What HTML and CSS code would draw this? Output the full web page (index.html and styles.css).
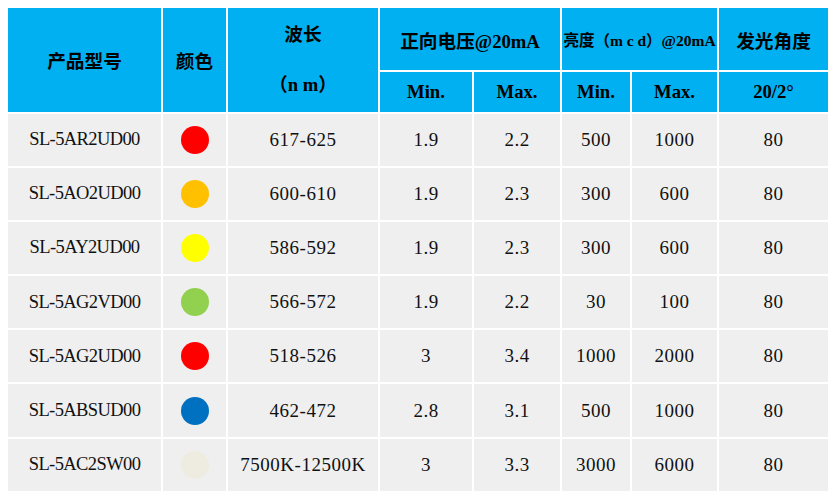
FILE: index.html
```html
<!DOCTYPE html>
<html lang="zh">
<head>
<meta charset="utf-8">
<link rel="stylesheet" href="styles.css">
</head>
<body>
<div class="wrap">
<table class="spec">
  <colgroup>
    <col class="c1"><col class="c2"><col class="c3"><col class="c4"><col class="c5"><col class="c6"><col class="c7"><col class="c8">
  </colgroup>
  <thead>
    <tr class="h1">
      <th rowspan="2">产品型号</th>
      <th rowspan="2">颜色</th>
      <th rowspan="2"><div class="wl"><span>波长</span><span>（n m）</span></div></th>
      <th colspan="2">正向电压@20mA</th>
      <th colspan="2" class="small">亮度（m c d）@20mA</th>
      <th>发光角度</th>
    </tr>
    <tr class="h2">
      <th>Min.</th>
      <th>Max.</th>
      <th>Min.</th>
      <th>Max.</th>
      <th>20/2°</th>
    </tr>
  </thead>
  <tbody>
    <tr><td class="model">SL-5AR2UD00</td><td><span class="dot red"></span></td><td>617-625</td><td>1.9</td><td>2.2</td><td>500</td><td>1000</td><td>80</td></tr>
    <tr><td class="model">SL-5AO2UD00</td><td><span class="dot amber"></span></td><td>600-610</td><td>1.9</td><td>2.3</td><td>300</td><td>600</td><td>80</td></tr>
    <tr><td class="model">SL-5AY2UD00</td><td><span class="dot yellow"></span></td><td>586-592</td><td>1.9</td><td>2.3</td><td>300</td><td>600</td><td>80</td></tr>
    <tr><td class="model">SL-5AG2VD00</td><td><span class="dot green"></span></td><td>566-572</td><td>1.9</td><td>2.2</td><td>30</td><td>100</td><td>80</td></tr>
    <tr><td class="model">SL-5AG2UD00</td><td><span class="dot red"></span></td><td>518-526</td><td>3</td><td>3.4</td><td>1000</td><td>2000</td><td>80</td></tr>
    <tr><td class="model">SL-5ABSUD00</td><td><span class="dot blue"></span></td><td>462-472</td><td>2.8</td><td>3.1</td><td>500</td><td>1000</td><td>80</td></tr>
    <tr><td class="model">SL-5AC2SW00</td><td><span class="dot white"></span></td><td>7500K-12500K</td><td>3</td><td>3.3</td><td>3000</td><td>6000</td><td>80</td></tr>
  </tbody>
</table>
</div>
</body>
</html>
```
FILE: styles.css
```css
html, body {
  margin: 0;
  padding: 0;
  background: #ffffff;
}
.wrap {
  padding: 6px;
}
.spec {
  border-collapse: separate;
  border-spacing: 2px;
  table-layout: fixed;
  width: 824px;
}
.c1 { width: 153px; }
.c2 { width: 63px; }
.c3 { width: 150px; }
.c4 { width: 92px; }
.c5 { width: 86px; }
.c6 { width: 68px; }
.c7 { width: 85px; }
.c8 { width: 109px; }

.spec th {
  background: #00b0f0;
  color: #000;
  font-family: "Liberation Serif", "Noto Sans CJK SC", serif;
  font-weight: 700;
  font-size: 18.67px;
  padding: 0;
  text-align: center;
  vertical-align: middle;
  white-space: nowrap;
}
.h1 th { height: 62px; }
.h2 th { height: 39.5px; }
.spec th.small {
  font-size: 15.5px;
}
.wl {
  display: flex;
  flex-direction: column;
  align-items: center;
  gap: 26px;
  line-height: 24px;
}
.spec td {
  background: #efefef;
  color: #111;
  font-family: "Liberation Serif", serif;
  font-size: 19px;
  letter-spacing: 0.5px;
  height: 52.2px;
  padding: 0;
  text-align: center;
  vertical-align: middle;
  white-space: nowrap;
}
.spec td.model {
  font-size: 18.5px;
  letter-spacing: -0.6px;
}
.dot {
  display: inline-block;
  width: 28px;
  height: 28px;
  border-radius: 50%;
  vertical-align: middle;
}
.red { background: #ff0000; }
.amber { background: #ffc000; }
.yellow { background: #ffff00; }
.green { background: #92d050; }
.blue { background: #0070c0; }
.white { background: #eeece1; }
```
